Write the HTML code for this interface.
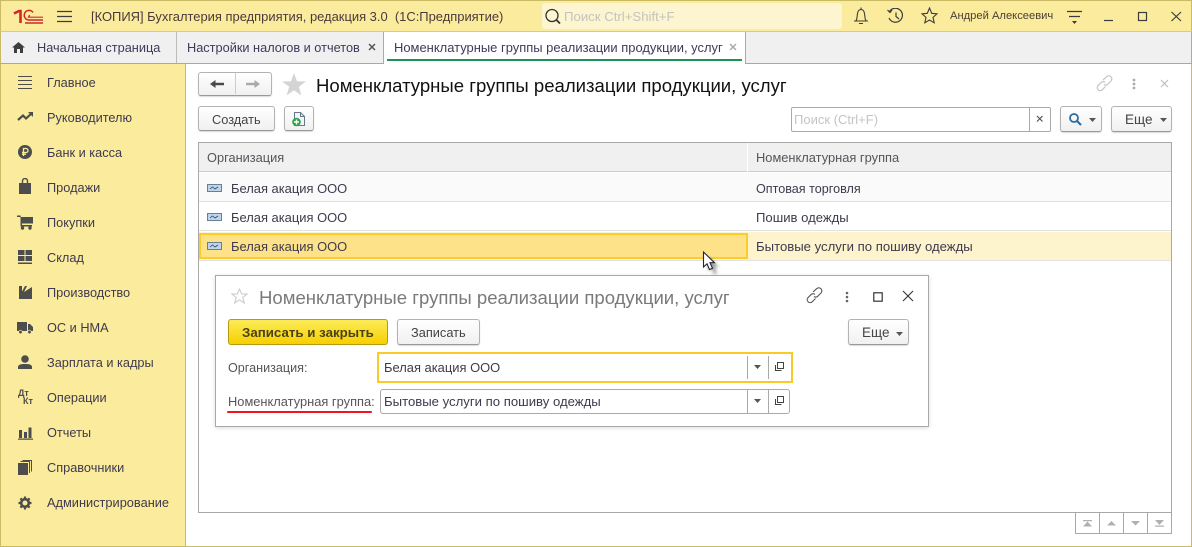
<!DOCTYPE html>
<html lang="ru"><head><meta charset="utf-8"><title>1C</title>
<style>
html,body{margin:0;padding:0;width:1192px;height:547px;overflow:hidden;background:#fff}
body{position:relative;font-family:"Liberation Sans",Arial,sans-serif;font-size:13px;color:#3f3a4d}
div,span,svg{position:absolute;box-sizing:border-box}
.t{white-space:nowrap;line-height:16px}
.btn{border:1px solid #b3b3b3;border-bottom-color:#999;border-radius:3px;background:linear-gradient(#fff,#f0f0f0);box-shadow:0 1px 1px rgba(0,0,0,.15)}
.m{left:47px;color:#3f3a4d;font-size:12.75px}
.ic{left:17px;width:16px;height:16px;fill:#4d4d4d}
</style></head><body>
<!-- top bar -->
<div style="left:0;top:0;width:1192px;height:32px;background:#fbeb9d;border-top:1px solid #c9bb66;border-left:1px solid #c9bb66;border-right:1px solid #c9bb66;border-bottom:1px solid #d8cb80"></div>
<svg style="left:13px;top:9px" width="31" height="15" viewBox="0 0 31 15" fill="none" stroke="#d2282a"><path d="M1 4.500L6 2H7.500V14" stroke-width="2.600"/><path d="M20 3.500A4.800 4.800 0 1 0 15.500 11H30" stroke-width="1.500"/><path d="M20 7A2 2 0 0 0 15.500 8H30" stroke-width="0"/><path d="M12 14H30" stroke-width="1.400"/><path d="M17 6.500A2 2 0 0 0 15.500 8.200H30" stroke-width="1.200"/></svg>
<svg style="left:57px;top:10px" width="15" height="13"><path d="M0 1.500H15M0 6.500H15M0 11.500H15" stroke="#3c3c3c" stroke-width="1.200"/></svg>
<span class="t" style="left:91px;top:9px;font-size:12.95px;color:#4a3a3a">[КОПИЯ] Бухгалтерия предприятия, редакция 3.0&nbsp; (1С:Предприятие)</span>
<div style="left:542px;top:3px;width:300px;height:26px;background:#fcf5d0;border-radius:3px"></div>
<svg style="left:544px;top:8px" width="18" height="18" fill="none" stroke="#333" stroke-width="1.300"><circle cx="8" cy="7.500" r="6"/><path d="M12.500 12L16 15.500" stroke-width="1.800"/></svg>
<span class="t" style="left:564px;top:9px;color:#c4c4bc;font-size:13.2px">Поиск Ctrl+Shift+F</span>
<svg style="left:853px;top:7px" width="16" height="18" fill="none" stroke="#3c3c3c" stroke-width="1.100"><path d="M1 14H15M3 14C4.500 11 4 9 4.500 6.500C5 3.500 6.500 2.500 8 2.500C9.500 2.500 11 3.500 11.500 6.500C12 9 11.500 11 13 14M6 16.500H10"/><path d="M8 .5V2.500"/></svg>
<svg style="left:887px;top:8px" width="17" height="16" fill="none" stroke="#3c3c3c" stroke-width="1.200"><path d="M2.500 3.500A7 7 0 1 1 2 10"/><path d="M.5 2L3 4.500L5 2"/><path d="M9 4.500V8.500L12 11"/></svg>
<svg style="left:921px;top:7px" width="17" height="17" fill="none" stroke="#3c3c3c" stroke-width="1.100"><path d="M8.500 1L10.700 6.300L16 6.800L12 10.400L13.200 15.800L8.500 13L3.800 15.800L5 10.400L1 6.800L6.300 6.300Z"/></svg>
<span class="t" style="left:950px;top:8px;font-size:11.200px;color:#4a4036">Андрей Алексеевич</span>
<svg style="left:1067px;top:10px" width="15" height="15"><path d="M0 1.500H15M2 6.500H13" stroke="#3c3c3c" stroke-width="1.200"/><path d="M5 11H10L7.500 14Z" fill="#3c3c3c"/></svg>
<svg style="left:1104px;top:10px" width="80" height="13" fill="none" stroke="#3c3c3c" stroke-width="1.200"><path d="M0 10.500H9"/><rect x="34.500" y="2.500" width="8" height="8"/><path d="M67.500 2L77 11M77 2L67.500 11"/></svg>
<!-- tabs -->
<div style="left:0;top:32px;width:1192px;height:32px;background:#f0f0f0;border-left:1px solid #c9bb66;border-right:1px solid #aaa;border-bottom:1px solid #a8a8a8"></div>
<svg style="left:12px;top:42px" width="14" height="12" fill="#3e3e3e"><path d="M6.500 0L13 5.500H11V11H8V7H5V11H2V5.500H0Z"/></svg>
<span class="t" style="left:37px;top:40px;color:#3f3a5a;font-size:12.750px">Начальная страница</span>
<div style="left:176px;top:32px;width:1px;height:31px;background:#bcbcbc"></div>
<span class="t" style="left:187px;top:40px;color:#3f3a5a;font-size:12.750px">Настройки налогов и отчетов</span>
<svg style="left:368px;top:43px" width="8" height="8"><path d="M1 1L7 7M7 1L1 7" stroke="#555" stroke-width="1.500"/></svg>
<div style="left:383px;top:32px;width:363px;height:32px;background:#fff;border-left:1px solid #aaa;border-right:1px solid #aaa"></div>
<span class="t" style="left:394px;top:40px;color:#3f3a5a;font-size:12.960px">Номенклатурные группы реализации продукции, услуг</span>
<svg style="left:729px;top:43px" width="8" height="8"><path d="M1 1L7 7M7 1L1 7" stroke="#aaa" stroke-width="1.500"/></svg>
<div style="left:387px;top:59px;width:355px;height:2px;background:#1e9358"></div>
<!-- sidebar -->
<div style="left:0;top:64px;width:186px;height:483px;background:#fbeb9d;border-left:1px solid #c9bb66;border-right:1px solid #c9bb66;border-bottom:1px solid #c9bb66"></div>
<svg class="ic" style="top:75px;left:18px" width="15" height="14" fill="none" stroke="#4d4d4d"><path d="M0 1.500H14M0 5.500H14M0 9.500H14M0 13.500H14"/></svg>
<svg class="ic" style="top:110px;left:17px;fill:none" width="17" height="14"><path d="M1 10L6 5.500L9 8.500L15 3" stroke="#4d4d4d" stroke-width="2.200" fill="none"/><path d="M11 2H16V7Z" fill="#4d4d4d"/></svg>
<svg class="ic" style="top:145px;left:18px"><circle cx="7" cy="7" r="7"/><path d="M5.500 11V3.500H8A2 2 0 0 1 8 7.500H4M4 9.200H8" stroke="#fbeb9d" stroke-width="1.300" fill="none"/></svg>
<svg class="ic" style="top:178px;left:19px"><path d="M0 5H12V16H0Z"/><path d="M3.500 8V3A2.500 2.500 0 0 1 8.500 3V8" fill="none" stroke="#4d4d4d" stroke-width="1.400"/></svg>
<svg class="ic" style="top:215px;left:17px;width:17px;height:15px"><path d="M0 .5H3.500L4 2H16V8.500H5V10H15V11.500H3.500V2H0Z"/><circle cx="5.500" cy="13" r="1.700"/><circle cx="13" cy="13" r="1.700"/></svg>
<svg class="ic" style="top:249px;left:17px"><path d="M1 1H7.500V6H1ZM8.500 1H15V6H8.500ZM1 7H7.500V12H1ZM8.500 7H15V12H8.500ZM1 13.500H15V15H1Z"/></svg>
<svg class="ic" style="top:285px;left:18px"><path d="M1 14V1H4V6.500L7 1H9L6 7L14 2V14Z"/></svg>
<svg class="ic" style="top:320px;left:17px"><path d="M0 2H10V11H0ZM11 4H13L16 7V11H11Z"/><circle cx="3.500" cy="12" r="1.800" stroke="#fbeb9d" stroke-width=".7"/><circle cx="12.500" cy="12" r="1.800" stroke="#fbeb9d" stroke-width=".7"/></svg>
<svg class="ic" style="top:355px;left:18px"><circle cx="7" cy="4" r="3.800"/><path d="M0 14V12C0 9.500 3 9 7 9C11 9 14 9.500 14 12V14Z"/></svg>
<span class="t" style="left:18px;top:389px;font-size:9px;font-weight:bold;color:#4d4d4d;line-height:9px">Дт</span>
<span class="t" style="left:23px;top:397px;font-size:9px;font-weight:bold;color:#4d4d4d;line-height:9px">Кт</span>
<svg class="ic" style="top:425px;left:18px"><path d="M1 5H4V13H1ZM6 7H9V13H6ZM10.500 2.500H13.500V13H10.500ZM0 13.500H15V14.700H0Z"/></svg>
<svg class="ic" style="top:460px;left:18px"><path d="M0 3H10V15H0Z"/><path d="M2.500 1.500H11.500V13M4.500 .5H13.500V11.500" fill="none" stroke="#4d4d4d"/></svg>
<svg class="ic" style="top:496px;left:18px"><circle cx="7" cy="7" r="3.800" fill="none" stroke="#4d4d4d" stroke-width="2.600"/><path d="M7 .5V3M7 11V13.500M.5 7H3M11 7H13.500M2.400 2.400L4.200 4.200M9.800 9.800L11.600 11.600M11.600 2.400L9.800 4.200M4.200 9.800L2.400 11.600" stroke="#4d4d4d" stroke-width="2.200"/></svg>
<span class="t m" style="top:75px">Главное</span>
<span class="t m" style="top:110px">Руководителю</span>
<span class="t m" style="top:145px">Банк и касса</span>
<span class="t m" style="top:180px">Продажи</span>
<span class="t m" style="top:215px">Покупки</span>
<span class="t m" style="top:250px">Склад</span>
<span class="t m" style="top:285px">Производство</span>
<span class="t m" style="top:320px">ОС и НМА</span>
<span class="t m" style="top:355px">Зарплата и кадры</span>
<span class="t m" style="top:390px">Операции</span>
<span class="t m" style="top:425px">Отчеты</span>
<span class="t m" style="top:460px">Справочники</span>
<span class="t m" style="top:495px;font-size:12.8px">Администрирование</span>
<!-- main -->
<div style="left:186px;top:64px;width:1006px;height:483px;background:#fff;border-right:1px solid #c9bb66;border-bottom:1px solid #c9bb66"></div>
<div class="btn" style="left:198px;top:72px;width:74px;height:24px"></div>
<div style="left:235px;top:73px;width:1px;height:21px;background:#ccc"></div>
<svg style="left:210px;top:79px" width="14" height="11" fill="#4a4a4a"><path d="M0 5L5.500 1V3.800H14V6.200H5.500V9Z"/></svg>
<svg style="left:246px;top:79px" width="14" height="11" fill="#aaa"><path d="M14 5L8.500 1V3.800H0V6.200H8.500V9Z"/></svg>
<svg style="left:282px;top:73px" width="24" height="23" fill="#d4d4d4"><path d="M12 0L15 8.400H24L16.800 13.700L19.400 22.500L12 17.200L4.600 22.500L7.200 13.700L0 8.400H9Z"/></svg>
<span class="t" style="left:316px;top:75px;font-size:18.560px;line-height:21px;color:#111">Номенклатурные группы реализации продукции, услуг</span>
<svg style="left:1096px;top:75px" width="17" height="17" fill="none" stroke="#c4c4c4" stroke-width="1.200"><path d="M7 5L10.500 1.800A3 3 0 0 1 15 6L11.500 9.500A3 3 0 0 1 8 9.500"/><path d="M9.500 11.500L6 15A3 3 0 0 1 1.800 10.800L5.300 7.300A3 3 0 0 1 9 7.500"/></svg>
<svg style="left:1132px;top:78px" width="4" height="12" fill="#aaa"><circle cx="2" cy="2" r="1.400"/><circle cx="2" cy="6" r="1.400"/><circle cx="2" cy="10" r="1.400"/></svg>
<svg style="left:1160px;top:79px" width="9" height="9"><path d="M1 1L8 8M8 1L1 8" stroke="#bbb" stroke-width="1.100"/></svg>
<div class="btn" style="left:198px;top:106px;width:77px;height:25px"></div>
<span class="t" style="left:212px;top:112px;color:#444;font-size:12.800px">Создать</span>
<div class="btn" style="left:284px;top:106px;width:30px;height:25px"></div>
<svg style="left:291px;top:112px" width="16" height="15"><path d="M3.500 .5H9.500L13.500 4.500V13.500H3.500Z" fill="#f2f5f9" stroke="#66788a"/><path d="M9.500 .5V4.500H13.500" fill="none" stroke="#66788a"/><circle cx="5.500" cy="10" r="4.300" fill="#2da24a"/><path d="M3 10H8M5.500 7.500V12.500" stroke="#fff" stroke-width="1.400"/></svg>
<div style="left:791px;top:107px;width:260px;height:25px;border:1px solid #aaa;border-radius:2px;background:#fff"></div>
<div style="left:1029px;top:107px;width:1px;height:25px;background:#aaa"></div>
<span class="t" style="left:794px;top:112px;color:#c4c4c4;font-size:13px">Поиск (Ctrl+F)</span>
<svg style="left:1036px;top:115px" width="8" height="8"><path d="M1 1L6.500 6.500M6.500 1L1 6.500" stroke="#555" stroke-width="1.200"/></svg>
<div class="btn" style="left:1060px;top:106px;width:42px;height:26px"></div>
<svg style="left:1068px;top:112px" width="15" height="15" fill="none" stroke="#2b6da3"><circle cx="6" cy="6" r="4" stroke-width="1.800"/><path d="M9 9L13 13" stroke-width="2.200"/></svg>
<svg style="left:1089px;top:118px" width="7" height="4" fill="#555"><path d="M0 0H7L3.500 4Z"/></svg>
<div class="btn" style="left:1111px;top:106px;width:61px;height:26px"></div>
<span class="t" style="left:1125px;top:112px;color:#444;font-size:13.500px">Еще</span>
<svg style="left:1160px;top:118px" width="7" height="4" fill="#555"><path d="M0 0H7L3.500 4Z"/></svg>
<!-- table -->
<div style="left:198px;top:142px;width:974px;height:371px;border:1px solid #a8a8a8;background:#fff"></div>
<div style="left:199px;top:143px;width:972px;height:29px;background:#f0f0f0;border-bottom:1px solid #ccc"></div>
<div style="left:747px;top:143px;width:1px;height:29px;background:#fff"></div>
<span class="t" style="left:207px;top:150px;color:#57545c;font-size:12.800px">Организация</span>
<span class="t" style="left:756px;top:150px;color:#57545c;font-size:12.870px">Номенклатурная группа</span>
<div style="left:199px;top:173px;width:972px;height:29px;background:#fafafa;border-bottom:1px solid #e2e2e2"></div>
<div style="left:199px;top:202px;width:972px;height:29px;background:#fff;border-bottom:1px solid #e2e2e2"></div>
<div style="left:199px;top:232px;width:972px;height:29px;background:#fdf3cc;border-bottom:1px solid #e2e2e2"></div>
<div style="left:199px;top:233px;width:549px;height:26px;background:#fde28a;border:2px solid #fbcc2c"></div>
<svg style="left:207px;top:184px" width="16" height="9"><rect x=".5" y=".5" width="14" height="7" fill="#bcd5ec" stroke="#6b7f92"/><path d="M3 5L5.500 3L8 5L11 3" stroke="#345" fill="none" stroke-width=".8"/></svg>
<svg style="left:207px;top:213px" width="16" height="9"><rect x=".5" y=".5" width="14" height="7" fill="#bcd5ec" stroke="#6b7f92"/><path d="M3 5L5.500 3L8 5L11 3" stroke="#345" fill="none" stroke-width=".8"/></svg>
<svg style="left:207px;top:242px" width="16" height="9"><rect x=".5" y=".5" width="14" height="7" fill="#bcd5ec" stroke="#6b7f92"/><path d="M3 5L5.500 3L8 5L11 3" stroke="#345" fill="none" stroke-width=".8"/></svg>
<span class="t" style="left:231px;top:181px;font-size:12.930px">Белая акация ООО</span>
<span class="t" style="left:231px;top:210px;font-size:12.930px">Белая акация ООО</span>
<span class="t" style="left:231px;top:239px;font-size:12.930px">Белая акация ООО</span>
<span class="t" style="left:756px;top:181px;font-size:12.600px">Оптовая торговля</span>
<span class="t" style="left:756px;top:210px;font-size:13.100px">Пошив одежды</span>
<span class="t" style="left:756px;top:239px;font-size:13.150px">Бытовые услуги по пошиву одежды</span>
<!-- pager -->
<div style="left:1075px;top:512px;width:97px;height:22px;border:1px solid #a8a8a8;background:#fff"></div>
<div style="left:1099px;top:512px;width:1px;height:22px;background:#a8a8a8"></div>
<div style="left:1123px;top:512px;width:1px;height:22px;background:#a8a8a8"></div>
<div style="left:1147px;top:512px;width:1px;height:22px;background:#a8a8a8"></div>
<svg style="left:1083px;top:520px" width="90" height="8" fill="#b0b0b0"><path d="M0 0H9V1.200H0ZM4.500 1.500L9 6.500H0ZM24 5.500L28.500 1L33 5.500ZM48 1H57L52.500 5.500ZM72 0H81L76.500 5ZM72 5.500H81V6.700H72Z"/></svg>
<!-- dialog -->
<div style="left:215px;top:275px;width:714px;height:152px;background:#fff;border:1px solid #aaa;box-shadow:0 1px 4px rgba(0,0,0,.15)"></div>
<svg style="left:231px;top:288px" width="17" height="16" fill="none" stroke="#c8c8c8"><path d="M8.500 1L10.600 6H16L11.700 9.500L13.300 15L8.500 11.800L3.700 15L5.300 9.500L1 6H6.400Z"/></svg>
<span class="t" style="left:259px;top:287px;font-size:18.560px;line-height:21px;color:#7a7a7a">Номенклатурные группы реализации продукции, услуг</span>
<svg style="left:806px;top:287px" width="17" height="17" fill="none" stroke="#555" stroke-width="1.100"><path d="M7 5L10.500 1.800A3 3 0 0 1 15 6L11.500 9.500A3 3 0 0 1 8 9.500"/><path d="M9.500 11.500L6 15A3 3 0 0 1 1.800 10.800L5.300 7.300A3 3 0 0 1 9 7.500"/></svg>
<svg style="left:845px;top:291px" width="4" height="12" fill="#666"><circle cx="2" cy="2" r="1.300"/><circle cx="2" cy="6" r="1.300"/><circle cx="2" cy="10" r="1.300"/></svg>
<svg style="left:873px;top:292px" width="10" height="10" fill="none" stroke="#333" stroke-width="1.200"><rect x=".8" y=".8" width="8.400" height="8.400"/></svg>
<svg style="left:902px;top:290px" width="12" height="12"><path d="M1 1L11 11M11 1L1 11" stroke="#333" stroke-width="1.100"/></svg>
<div style="left:228px;top:319px;width:160px;height:26px;border:1px solid #b89a10;border-radius:3px;background:linear-gradient(#fcec58,#f8cf00)"></div>
<span class="t" style="left:242px;top:325px;font-weight:bold;font-size:13.300px;color:#4a4218">Записать и закрыть</span>
<div class="btn" style="left:397px;top:319px;width:83px;height:26px"></div>
<span class="t" style="left:411px;top:325px;color:#444;font-size:12.800px">Записать</span>
<div class="btn" style="left:848px;top:319px;width:61px;height:26px"></div>
<span class="t" style="left:862px;top:325px;color:#444;font-size:13.500px">Еще</span>
<svg style="left:896px;top:332px" width="7" height="4" fill="#555"><path d="M0 0H7L3.500 4Z"/></svg>
<span class="t" style="left:228px;top:360px;color:#57545c;font-size:12.600px">Организация:</span>
<div style="left:377px;top:352px;width:416px;height:31px;border:2px solid #fbc92a;background:#fff"></div>
<span class="t" style="left:384px;top:360px;font-size:12.930px">Белая акация ООО</span>
<div style="left:747px;top:356px;width:1px;height:23px;background:#aaa"></div>
<div style="left:768px;top:356px;width:1px;height:23px;background:#aaa"></div>
<svg style="left:754px;top:365px" width="7" height="4" fill="#555"><path d="M0 0H7L3.500 4Z"/></svg>
<svg style="left:775px;top:362px" width="10" height="10" fill="none" stroke="#444"><path d="M2.500 .5H8.500V6.500H2.500Z"/><path d="M.5 3V8.500H6.500" /></svg>
<span class="t" style="left:228px;top:394px;color:#57545c;font-size:12.860px">Номенклатурная группа:</span>
<div style="left:227px;top:411px;width:145px;height:2px;background:#f0141e;border-radius:1px"></div>
<div style="left:380px;top:389px;width:410px;height:25px;border:1px solid #aaa;border-radius:3px;background:#fff"></div>
<span class="t" style="left:384px;top:394px;font-size:13.150px">Бытовые услуги по пошиву одежды</span>
<div style="left:747px;top:389px;width:1px;height:25px;background:#aaa"></div>
<div style="left:768px;top:389px;width:1px;height:25px;background:#aaa"></div>
<svg style="left:754px;top:399px" width="7" height="4" fill="#555"><path d="M0 0H7L3.500 4Z"/></svg>
<svg style="left:775px;top:396px" width="10" height="10" fill="none" stroke="#444"><path d="M2.500 .5H8.500V6.500H2.500Z"/><path d="M.5 3V8.500H6.500"/></svg>
<!-- cursor -->
<svg style="left:700px;top:250px" width="26" height="30"><path d="M5 4L5 18L8.500 15L11 21L14 20L11.500 14L16 14Z" fill="rgba(0,0,0,.4)" transform="translate(3 3)" style="filter:blur(1.500px)"/><path d="M3.500 2V17L7 13.800L9.500 19.500L12.500 18.300L10 12.700H14.500Z" fill="#fff" stroke="#20262e" stroke-width="1.100"/></svg>
</body></html>
